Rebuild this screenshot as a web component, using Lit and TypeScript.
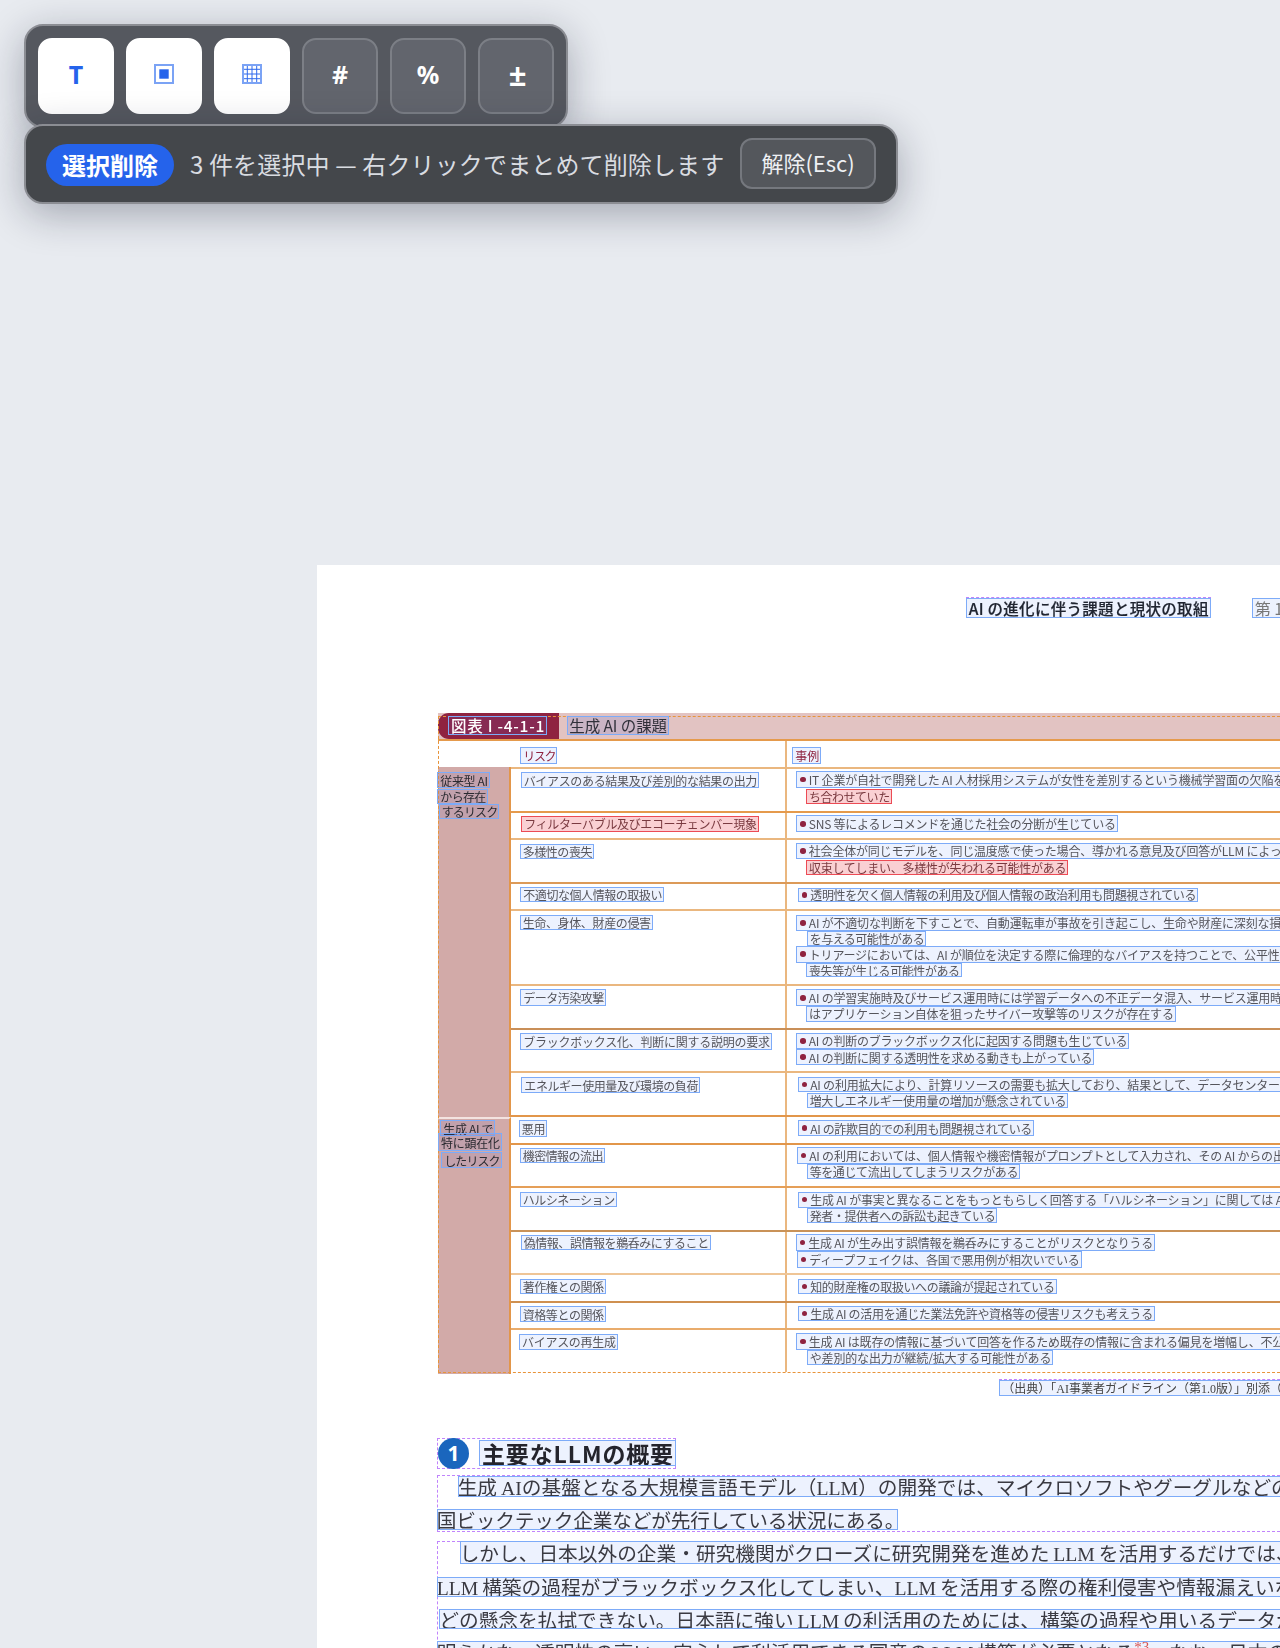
import { LitElement, html, css } from "lit";
import { customElement } from "lit/decorators.js";

type Box = [number, number, number, number, string, string?];
const EDGE = 1300;
const PAGE_X = 317;
const PAGE_Y = 565;

const regions: [number, number, number, number, string][] = [
  [965.7, 597.3, 1210.7, 617.7, "reg"],
  [999.3, 1379.3, EDGE, 1396, "reg"],
  [437.3, 1438.3, 676, 1468.7, "reg"],
  [436.7, 1474.7, EDGE, 1532.3, "reg"],
  [436.7, 1541.3, EDGE, 1700, "reg"],
  [437.5, 716, EDGE, 1372.5, "orange"],
];

const boxes: Box[] = [
  [965.7, 598, 1210.7, 617.5, "AI の進化に伴う課題と現状の取組", "title"],
  [1251.7, 598, EDGE, 618, "第 1 編", "chap"],
  [448, 715.7, 547, 734.7, "図表 I -4-1-1", "tabt"],
  [567.3, 715.5, 669, 735, "生成 AI の課題", "cap"],
  [520.3, 747.3, 557.3, 763.7, "リスク", "mar"],
  [792.3, 747.3, 821, 763.7, "事例", "mar"],
  [437.3, 772.3, 489.7, 788, "従来型 AI", "side"],
  [437.3, 789, 487.7, 804, "から存在", "side"],
  [438.7, 804, 499.3, 819.3, "するリスク", "side"],
  [520.7, 772.3, 759, 787.7, "バイアスのある結果及び差別的な結果の出力"],
  [796.3, 771, EDGE, 787.7, "IT 企業が自社で開発した AI 人材採用システムが女性を差別するという機械学習面の欠陥を持", "dot"],
  [806, 789, 891.7, 804.3, "ち合わせていた", "red"],
  [521.3, 816, 758.7, 831.7, "フィルターバブル及びエコーチェンバー現象", "red"],
  [796.3, 815.3, 1117.7, 832.3, "SNS 等によるレコメンドを通じた社会の分断が生じている", "dot"],
  [519.7, 844.3, 594, 859, "多様性の喪失"],
  [796.3, 842.7, EDGE, 859.3, "社会全体が同じモデルを、同じ温度感で使った場合、導かれる意見及び回答がLLM によって", "dot"],
  [806, 860, 1068.3, 875, "収束してしまい、多様性が失われる可能性がある", "red"],
  [520.3, 887.3, 664, 902, "不適切な個人情報の取扱い"],
  [797.7, 887.7, 1198.3, 902, "透明性を欠く個人情報の利用及び個人情報の政治利用も問題視されている", "dot"],
  [519.7, 915, 652.7, 930, "生命、身体、財産の侵害"],
  [796.3, 914.7, EDGE, 931, "AI が不適切な判断を下すことで、自動運転車が事故を引き起こし、生命や財産に深刻な損害", "dot"],
  [806.7, 931, 926.3, 946, "を与える可能性がある"],
  [796.3, 945.7, EDGE, 962.7, "トリアージにおいては、AI が順位を決定する際に倫理的なバイアスを持つことで、公平性の", "dot"],
  [806, 963.3, 961.7, 977, "喪失等が生じる可能性がある"],
  [520.3, 989.3, 605.7, 1005.7, "データ汚染攻撃"],
  [796.3, 989.3, EDGE, 1006.3, "AI の学習実施時及びサービス運用時には学習データへの不正データ混入、サービス運用時に", "dot"],
  [806, 1005.7, 1175.7, 1022.3, "はアプリケーション自体を狙ったサイバー攻撃等のリスクが存在する"],
  [520.3, 1032.7, 771.7, 1049.7, "ブラックボックス化、判断に関する説明の要求"],
  [796.3, 1032.7, 1129.3, 1049.3, "AI の判断のブラックボックス化に起因する問題も生じている", "dot"],
  [796.3, 1049, 1094.3, 1065.3, "AI の判断に関する透明性を求める動きも上がっている", "dot"],
  [521.3, 1077.3, 700, 1092.7, "エネルギー使用量及び環境の負荷"],
  [797.7, 1077.3, EDGE, 1092, "AI の利用拡大により、計算リソースの需要も拡大しており、結果として、データセンターが", "dot"],
  [806.7, 1093, 1068.3, 1108, "増大しエネルギー使用量の増加が懸念されている"],
  [440.3, 1120.3, 495.3, 1136, "生成 AI で", "side"],
  [438, 1133.3, 501.7, 1150.7, "特に顕在化", "side"],
  [441.3, 1152, 501.7, 1168.3, "したリスク", "side"],
  [518.7, 1119.7, 547.3, 1136.7, "悪用"],
  [797.7, 1120.3, 1034, 1135.7, "AI の詐欺目的での利用も問題視されている", "dot"],
  [519.7, 1147.7, 605, 1163, "機密情報の流出"],
  [796.7, 1147.3, EDGE, 1164, "AI の利用においては、個人情報や機密情報がプロンプトとして入力され、その AI からの出力", "dot"],
  [806.7, 1164.3, 1020, 1179, "等を通じて流出してしまうリスクがある"],
  [519.7, 1192, 616.7, 1207, "ハルシネーション"],
  [797.7, 1191.7, EDGE, 1207.7, "生成 AI が事実と異なることをもっともらしく回答する「ハルシネーション」に関しては AI 開", "dot"],
  [806.7, 1207.7, 997.3, 1222.7, "発者・提供者への訴訟も起きている"],
  [520.7, 1234.7, 710.7, 1250, "偽情報、誤情報を鵜呑みにすること"],
  [795.7, 1234.3, 1155, 1251, "生成 AI が生み出す誤情報を鵜呑みにすることがリスクとなりうる", "dot"],
  [796.7, 1251, 1081.7, 1268, "ディープフェイクは、各国で悪用例が相次いでいる", "dot"],
  [519.7, 1279, 605.7, 1294, "著作権との関係"],
  [797.7, 1279.3, 1056.7, 1293.7, "知的財産権の取扱いへの議論が提起されている", "dot"],
  [519.7, 1306.3, 605.7, 1321.7, "資格等との関係"],
  [797.7, 1306.3, 1155, 1321, "生成 AI の活用を通じた業法免許や資格等の侵害リスクも考えうる", "dot"],
  [519, 1333.5, 617.7, 1350, "バイアスの再生成"],
  [796.3, 1333.3, EDGE, 1350, "生成 AI は既存の情報に基づいて回答を作るため既存の情報に含まれる偏見を増幅し、不公平", "dot"],
  [806.7, 1350, 1053.3, 1364.7, "や差別的な出力が継続/拡大する可能性がある"],
  [999.3, 1380, EDGE, 1395.5, "（出典）「AI事業者ガイドライン（第1.0版）」別添（概要）", "src"],
  [479, 1440, 676, 1466, "主要なLLMの概要", "head"],
  [457.7, 1476.3, EDGE, 1497, "生成\u2009AIの基盤となる大規模言語モデル（LLM）の開発では、マイクロソフトやグーグルなどの", "para"],
  [436.7, 1508.7, 898.3, 1529.7, "国ビックテック企業などが先行している状況にある。", "para"],
  [459.7, 1541.3, EDGE, 1564.3, "しかし、日本以外の企業・研究機関がクローズに研究開発を進めた\u2009LLM\u2009を活用するだけでは、", "para"],
  [436.7, 1577, EDGE, 1596.7, "LLM\u2009構築の過程がブラックボックス化してしまい、LLM\u2009を活用する際の権利侵害や情報漏えいな", "para"],
  [439.3, 1609.3, EDGE, 1628.7, "どの懸念を払拭できない。日本語に強い\u2009LLM\u2009の利活用のためには、構築の過程や用いるデータが", "para"],
  [436.7, 1640.7, EDGE, 1662, "明らかな、透明性の高い、安心して利活用できる国産の\u2009LLM\u2009構築が必要となる|*3|。なお、日本の企業", "para"],
];

const rowsA: [number, string][] = [
  [44, "#e59a4c"], [27, "#eab77f"], [44, "#dc9a58"], [27, "#eab77f"], [75, "#eab77f"],
  [44, "#c98f58"], [43, "#eab77f"], [44, "#e2964a"],
];
const rowsB: [number, string][] = [
  [28, "#e2964a"], [43, "#e59f58"], [44, "#c99258"], [43, "#efc596"], [28, "#cf9050"],
  [27, "#e9ac6c"], [44, "transparent"],
];

@customElement("app-root")
export class AppRoot extends LitElement {
  static styles = css`
    :host {
      display: block;
      position: relative;
      width: 1280px;
      height: 1648px;
      overflow: hidden;
      background: #e8ebf0;
      font-family: "Noto Sans CJK JP", "Noto Sans", sans-serif;
    }
    .top {
      display: flex;
      flex-direction: column;
      align-items: flex-start;
      height: 541px;
      padding: 24px 0 0 24px;
      box-sizing: content-box;
    }
    .tools {
      display: flex;
      gap: 12px;
      padding: 12px;
      background: #55585f;
      border: 2px solid #8b8d93;
      border-radius: 19px;
      box-shadow: 0 10px 40px rgba(15, 23, 42, 0.32);
    }
    .tool {
      width: 76px;
      height: 76px;
      box-sizing: border-box;
      display: flex;
      align-items: center;
      justify-content: center;
      padding-bottom: 4px;
      border-radius: 14px;
      font-size: 25px;
      font-weight: 700;
      background: #62656d;
      border: 2px solid #7c7f86;
      color: #fff;
      font-family: "Noto Sans", sans-serif;
    }
    .tool.on {
      background: #fff;
      border-color: #fff;
      color: #2563eb;
    }
    .tool.pm {
      font-size: 31px;
      padding-left: 3px;
    }
    .bar {
      display: flex;
      align-items: center;
      gap: 16px;
      margin-top: -4px;
      height: 80px;
      box-sizing: border-box;
      padding: 0 20px;
      position: relative;
      background: #44474b;
      border: 2px solid #8b8d93;
      border-radius: 19px;
      box-shadow: 0 10px 40px rgba(15, 23, 42, 0.32);
      color: #d9dce1;
      font-size: 24px;
      white-space: nowrap;
    }
    .pill {
      background: #2563eb;
      color: #fff;
      font-weight: 700;
      height: 42px;
      line-height: 42px;
      padding: 0 16px;
      margin-top: 1px;
      border-radius: 21px;
    }
    .msg { line-height: 42px; letter-spacing: 0.14px; }
    .esc {
      height: 51px;
      box-sizing: border-box;
      padding: 0 19px 3px;
      margin-bottom: 1px;
      display: flex;
      align-items: center;
      border: 2px solid #75787e;
      background: #54575c;
      border-radius: 12px;
      color: #eef0f3;
      font-size: 22px;
    }
    .page {
      position: relative;
      width: 1100px;
      height: 1083px;
      margin-left: 317px;
      background: #fff;
      padding: 148px 0 0 121px;
      box-sizing: border-box;
    }
    .fig { width: 980px; }
    .band {
      height: 26px;
      background: #e2c3c2;
      display: flex;
    }
    .tab {
      width: 121px;
      background: #8f2340;
      border-radius: 11px 0 0 11px;
    }
    .headrow {
      display: flex;
      height: 28px;
      border-top: 2px solid #e59a4c;
      box-sizing: border-box;
    }
    .headrow .gap {
      width: 347px;
      border-right: 2px solid #eab77f;
    }
    .group { display: flex; }
    .sidecol {
      width: 73px;
      flex: none;
      background: #d2aaa8;
      border-right: 2px solid #e2964a;
      box-sizing: border-box;
    }
    .group.second .sidecol { border-top: 2px solid #f3e3e0; }
    .rows { flex: 1; }
    .row {
      display: flex;
      box-sizing: border-box;
      border-bottom: 2px solid;
    }
    .rows.first { border-top: 2px solid #eab77f; }
    .risk {
      width: 274px;
      flex: none;
      border-right: 2px solid #eab77f;
    }
    .reg, .orange, .b {
      position: absolute;
      box-sizing: border-box;
    }
    .reg { border: 1.3px dashed #c084fc; }
    .orange { border: 1.6px dashed #e8943a; }
    .circle {
      position: absolute;
      left: 121px;
      top: 873px;
      width: 31px;
      height: 31px;
      border-radius: 50%;
      background: #1a66bd;
      color: #fff;
      font: 700 21px/31px "Noto Sans", sans-serif;
      text-align: center;
    }
    .b {
      display: flex;
      align-items: center;
      white-space: nowrap;
      overflow: hidden;
      border: 1.5px solid #7dabf8;
      background: rgba(59, 110, 240, 0.09);
      padding-left: 2px;
      font-size: 12px;
      color: #55555c;
    }
    .b .t {
      display: inline-block;
      letter-spacing: -0.2px;
      filter: blur(0.35px);
    }
    .b.red {
      border-color: #ec4b55;
      border-width: 1.8px;
      background: rgba(235, 60, 70, 0.24);
      color: #7a3a40;
    }
    .b.dot::before {
      content: "";
      flex: none;
      width: 5.5px;
      height: 5.5px;
      border-radius: 50%;
      background: #8f2340;
      margin: 0 3px 0 1px;
    }
    .b.mar { color: #8f2340; }
    .b.side {
      color: #2a2a30;
      background: rgba(59, 90, 220, 0.1);
    }
    .b.title {
      font-size: 15.5px;
      color: #1f2430;
      font-weight: 500;
      -webkit-text-stroke: 0.2px #1f2430;
    }
    .b.chap { font-size: 16px; color: #777; }
    .b.chap .t { letter-spacing: 0; }
    .b.tabt {
      font-size: 15.5px;
      color: #fff;
      font-weight: 500;
      background: rgba(80, 100, 220, 0.12);
    }
    .b.cap {
      font-size: 15.5px;
      color: #30303a;
      background: rgba(59, 90, 220, 0.14);
      padding-left: 1px;
    }
    .b.src {
      font-family: "Liberation Serif", "Noto Sans CJK JP", serif;
      font-size: 12px;
      color: #444;
    }
    .b.src .t { letter-spacing: 0; }
    .b.head {
      font-size: 23px;
      font-weight: 700;
      color: #24242c;
      padding-left: 2px;
    }
    .b.para {
      font-family: "Liberation Serif", "Noto Sans CJK JP", serif;
      font-size: 19.7px;
      color: #3a3a42;
      padding-left: 0;
    }
    .b.para .t { letter-spacing: 0; margin-left: -1px; }
    .note { color: #d9534f; font-size: 15px; vertical-align: super; line-height: 0; }
  `;

  firstUpdated() {
    this.renderRoot.querySelectorAll<HTMLElement>(".b[data-fit]").forEach((el) => {
      const t = el.querySelector<HTMLElement>(".t")!;
      const s = t.textContent || "";
      t.style.letterSpacing = "0px";
      const size = parseFloat(getComputedStyle(t).fontSize);
      const tail = s.endsWith("。") ? size * 0.4 : 0;
      const boxRight = el.getBoundingClientRect().right - 2;
      const rect = t.getBoundingClientRect();
      t.style.letterSpacing = `${(boxRight + tail - rect.left - rect.width) / s.length}px`;
    });
  }

  private row(r: [number, string]) {
    return html`<div class="row" style="height:${r[0]}px;border-bottom-color:${r[1]}">
      <div class="risk"></div>
    </div>`;
  }

  private label(text: string) {
    if (!text.includes("|")) return text;
    const [a, n, b] = text.split("|");
    return html`${a}<span class="note">${n}</span>${b}`;
  }

  render() {
    return html`
      <div class="top">
        <div class="tools">
          <div class="tool on">T</div>
          <div class="tool on">
            <svg width="20" height="20" viewBox="0 0 20 20">
              <rect x="1" y="1" width="18" height="18" fill="#fff" stroke="#7ba3f5" stroke-width="2" />
              <rect x="5.3" y="5.3" width="9.4" height="9.4" fill="#2563eb" />
            </svg>
          </div>
          <div class="tool on">
            <svg width="20" height="20" viewBox="0 0 20 20" fill="none">
              <path d="M5.3 1v18M10 1v18M14.7 1v18M1 5.3h18M1 10h18M1 14.7h18" stroke="#2f69ec" stroke-width="1" />
              <rect x="1" y="1" width="18" height="18" stroke="#7ba3f5" stroke-width="2" />
            </svg>
          </div>
          <div class="tool">#</div>
          <div class="tool">%</div>
          <div class="tool pm">±</div>
        </div>
        <div class="bar">
          <span class="pill">選択削除</span>
          <span class="msg">3 件を選択中 — 右クリックでまとめて削除します</span>
          <span class="esc">解除(Esc)</span>
        </div>
      </div>
      <div class="page">
        <div class="fig">
          <div class="band"><div class="tab"></div></div>
          <div class="headrow"><div class="gap"></div></div>
          <div class="group">
            <div class="sidecol"></div>
            <div class="rows first">${rowsA.map((r) => this.row(r))}</div>
          </div>
          <div class="group second">
            <div class="sidecol"></div>
            <div class="rows">${rowsB.map((r) => this.row(r))}</div>
          </div>
        </div>
        ${regions.map(
          ([x0, y0, x1, y1, cls]) =>
            html`<div
              class="${cls}"
              style="left:${x0 - PAGE_X}px;top:${y0 - PAGE_Y}px;width:${x1 - x0}px;height:${y1 - y0}px"
            ></div>`
        )}
        <div class="circle">1</div>
        ${boxes.map(([x0, y0, x1, y1, text, cls]) => {
          const fit = x1 < EDGE;
          return html`<div
            class="b ${cls || ""}"
            ?data-fit=${fit}
            style="left:${x0 - PAGE_X}px;top:${y0 - PAGE_Y}px;width:${x1 - x0}px;height:${y1 - y0}px"
          ><span class="t">${this.label(text)}</span></div>`;
        })}
      </div>
    `;
  }
}
